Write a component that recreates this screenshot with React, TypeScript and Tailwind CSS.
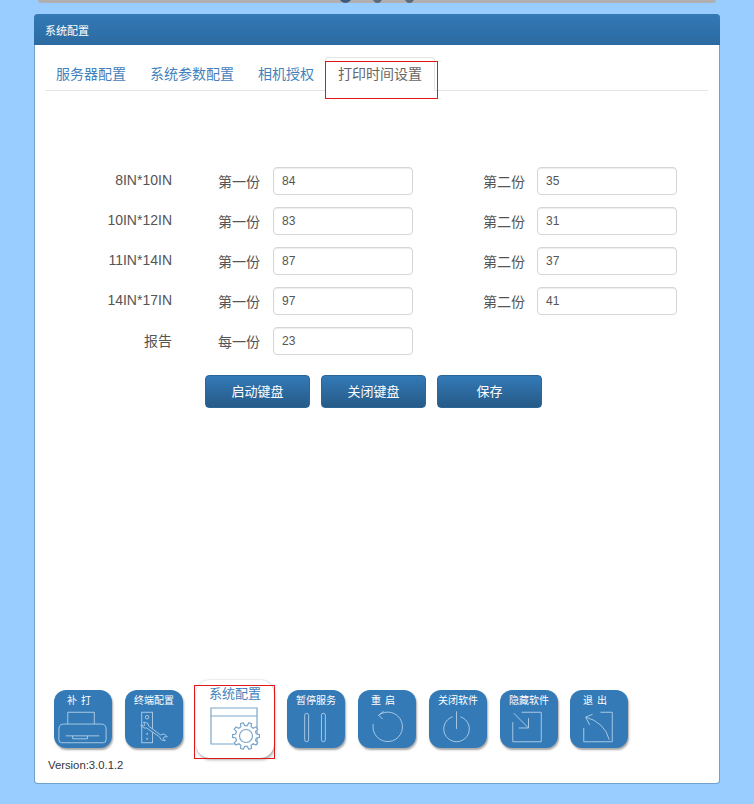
const sizes = [
  { name: "8IN*10IN", first: "84", second: "35" },
  { name: "10IN*12IN", first: "83", second: "31" },
  { name: "11IN*14IN", first: "87", second: "37" },
  { name: "14IN*17IN", first: "97", second: "41" },
];

// outline of the gear on the 系统配置 button
function gearPath(cx: number, cy: number, outer: number, inner: number, teeth: number) {
  const points: string[] = [];
  const step = (Math.PI * 2) / teeth;
  for (let i = 0; i < teeth; i++) {
    const a = i * step;
    const offsets: [number, number][] = [
      [-0.3, inner],
      [-0.17, outer],
      [0.17, outer],
      [0.3, inner],
    ];
    offsets.forEach(([o, r]) => {
      const x = cx + r * Math.cos(a + o * step);
      const y = cy + r * Math.sin(a + o * step);
      points.push(`${x.toFixed(1)} ${y.toFixed(1)}`);
    });
  }
  return `M${points.join("L")}Z`;
}

function Field({ label, value, second }: { label: string; value: string; second?: boolean }) {
  return (
    <div className="flex items-center">
      <span className="w-[42px] text-[14px] text-[#555] pt-[2px] whitespace-nowrap">{label}</span>
      <div
        className={`${second ? "ml-[12px]" : "ml-[13px]"} w-[140px] h-[28px] bg-white border border-[#d6d6d6] rounded-[4px] shadow-[inset_0_1px_1px_rgba(0,0,0,0.075)] pl-[8px] text-[12px] leading-[26px] text-[#555]`}
      >
        {value}
      </div>
    </div>
  );
}

function ToolButton({ title, spaced, children }: { title: string; spaced?: boolean; children: React.ReactNode }) {
  return (
    <div className="w-[58px] h-[58px] rounded-[12px] bg-[#337ab7] shadow-[1px_2px_2px_rgba(110,110,110,0.6)] flex flex-col items-center text-white shrink-0">
      <span className={`mt-[5px] text-[10px] leading-[12px] whitespace-nowrap ${spaced ? "tracking-[4px] pr-[4px]" : ""}`}>{title}</span>
      <svg viewBox="0 0 59 41" className="w-[58px] h-[41px]" fill="none" stroke="#a9c9e4" strokeWidth="1">
        {children}
      </svg>
    </div>
  );
}

function PanelButton({ label }: { label: string }) {
  return (
    <div className="w-[105px] h-[33px] rounded-[4px] border border-[#2b6699] bg-gradient-to-b from-[#337ab7] to-[#265a88] text-white text-[13px] pt-[1px] flex items-center justify-center">
      {label}
    </div>
  );
}

export default function App() {
  return (
    <div className="w-[754px] h-[804px] bg-[#99ccff] overflow-hidden relative font-['Liberation_Sans','Noto_Sans_CJK_SC',sans-serif]">
      {/* clipped bar on top of the page */}
      <div className="mx-[38px] h-[3px] bg-[#b0b0b0] rounded-b-[6px] relative">
        <span className="absolute left-[301px] top-[-5px] w-[13px] h-[8px] rounded-b-full bg-[#3a5a80]" />
        <span className="absolute left-[335px] top-[-3px] w-[9px] h-[6px] rounded-b-full bg-[#5a6a7a]" />
        <span className="absolute left-[367px] top-[-3px] w-[9px] h-[6px] rounded-b-full bg-[#5a6a7a]" />
      </div>

      <div className="mt-[11px] ml-[34px] w-[686px] h-[770px] bg-white border border-[#337ab7]/70 rounded-[4px] flex flex-col">
        <div className="h-[31px] -mx-px -mt-px rounded-t-[4px] bg-gradient-to-b from-[#337ab7] to-[#2b6aa0] pl-[11px] text-white text-[11px] leading-[34px] shrink-0">
          系统配置
        </div>

        {/* tabs */}
        <div className="ml-[10px] mr-[11px] mt-[12px] h-[34px] border-b border-[#e4e4e4] flex items-end text-[14px] shrink-0">
          <span className="h-[33px] pl-[11px] pr-[12px] leading-[34px] text-[#4282bc] whitespace-nowrap">服务器配置</span>
          <span className="h-[33px] px-[12px] leading-[34px] text-[#4282bc] whitespace-nowrap">系统参数配置</span>
          <span className="h-[33px] px-[12px] leading-[34px] text-[#4282bc] whitespace-nowrap">相机授权</span>
          <span className="h-[34px] -mb-px ml-[-1px] px-[12px] leading-[32px] text-[#666] bg-white border border-[#e4e4e4] border-b-white rounded-t-[4px] whitespace-nowrap">打印时间设置</span>
        </div>

        {/* form */}
        <div className="mt-[76px] flex flex-col gap-[12px]">
          {sizes.map((s) => (
            <div key={s.name} className="flex h-[28px] items-center">
              <span className="w-[137px] text-right text-[14px] text-[#555] pb-[2px]">{s.name}</span>
              <div className="ml-[46px]">
                <Field label="第一份" value={s.first} />
              </div>
              <div className="ml-[70px]">
                <Field label="第二份" value={s.second} second />
              </div>
            </div>
          ))}
          <div className="flex h-[28px] items-center">
            <span className="w-[137px] text-right text-[14px] text-[#555]">报告</span>
            <div className="ml-[46px]">
              <Field label="每一份" value="23" />
            </div>
          </div>
        </div>

        <div className="mt-[20px] ml-[170px] flex gap-[11px]">
          <PanelButton label="启动键盘" />
          <PanelButton label="关闭键盘" />
          <PanelButton label="保存" />
        </div>

        {/* toolbar */}
        <div className="mt-auto pb-[11px]">
          <div className="ml-[19px] flex items-start gap-[13px]">
            <ToolButton title="补打" spaced>
              <path d="M14 17V5h27v12" />
              <path d="M5 33V22q0-5 5-5h38q5 0 5 5v11q0 3-3 3H8q-3 0-3-3z" />
              <path d="M12 29h34M19 29v3h15v-3" />
            </ToolButton>
            <ToolButton title="终端配置">
              <rect x="17" y="5" width="11" height="31" />
              <circle cx="22.500" cy="10" r="1.800" />
              <circle cx="22.500" cy="27" r="0.600" />
              <circle cx="22.500" cy="32" r="0.600" />
              <path
                d="M19 15l4 1 1 3 12 9 4-1 3 3-3 0-1 2 2 2-4-1-2-3-13-9-3 0-3-3 3 1 1-1z"
                fill="#337ab7"
              />
            </ToolButton>

            <div className="w-[78px] h-[78px] -mt-[10px] rounded-[14px] bg-white shadow-[1px_2px_3px_rgba(110,110,110,0.55),0_0_2px_rgba(150,150,150,0.5)] flex flex-col items-center shrink-0">
              <span className="mt-[7px] text-[13px] leading-[14px] text-[#4282bc] whitespace-nowrap">系统配置</span>
              <svg viewBox="0 0 78 57" className="w-[78px] h-[57px]" fill="none" stroke="#7ba6cb" strokeWidth="1.2">
                <path d="M15 7h46v36H15zM15 15h46" />
                <path d={gearPath(50, 35, 13.5, 10.5, 10)} fill="white" />
                <circle cx="50" cy="35" r="6.500" />
              </svg>
            </div>

            <ToolButton title="暂停服务">
              <rect x="18" y="6" width="4" height="29" rx="2" />
              <rect x="35" y="6" width="4" height="29" rx="2" />
            </ToolButton>
            <ToolButton title="重启" spaced>
              <path d="M21 8A15 15 0 1 1 15.500 17M26 4L21 8L25 12" />
            </ToolButton>
            <ToolButton title="关闭软件">
              <path d="M32 9.600A13 13 0 1 1 24 9.600M28 4V22" />
            </ToolButton>
            <div className="-mr-px">
              <ToolButton title="隐藏软件">
                <path d="M22 5H42V35H13V15M14 6L29 21M19 21H29V11" />
              </ToolButton>
            </div>
            <ToolButton title="退出" spaced>
              <path d="M31 5H43V35H14V21M40 33Q35 15 16 10M23 7L16 10L20 18" />
            </ToolButton>
          </div>
          <div className="ml-[13px] text-[11.3px] leading-[14px] text-[#333]">Version:3.0.1.2</div>
        </div>
      </div>

      {/* red annotation boxes */}
      <div className="absolute left-[325px] top-[61px] w-[113px] h-[38px] border border-[#e0161b]" />
      <div className="absolute left-[194px] top-[685px] w-[81px] h-[74px] border border-[#e0161b]" />
    </div>
  );
}
